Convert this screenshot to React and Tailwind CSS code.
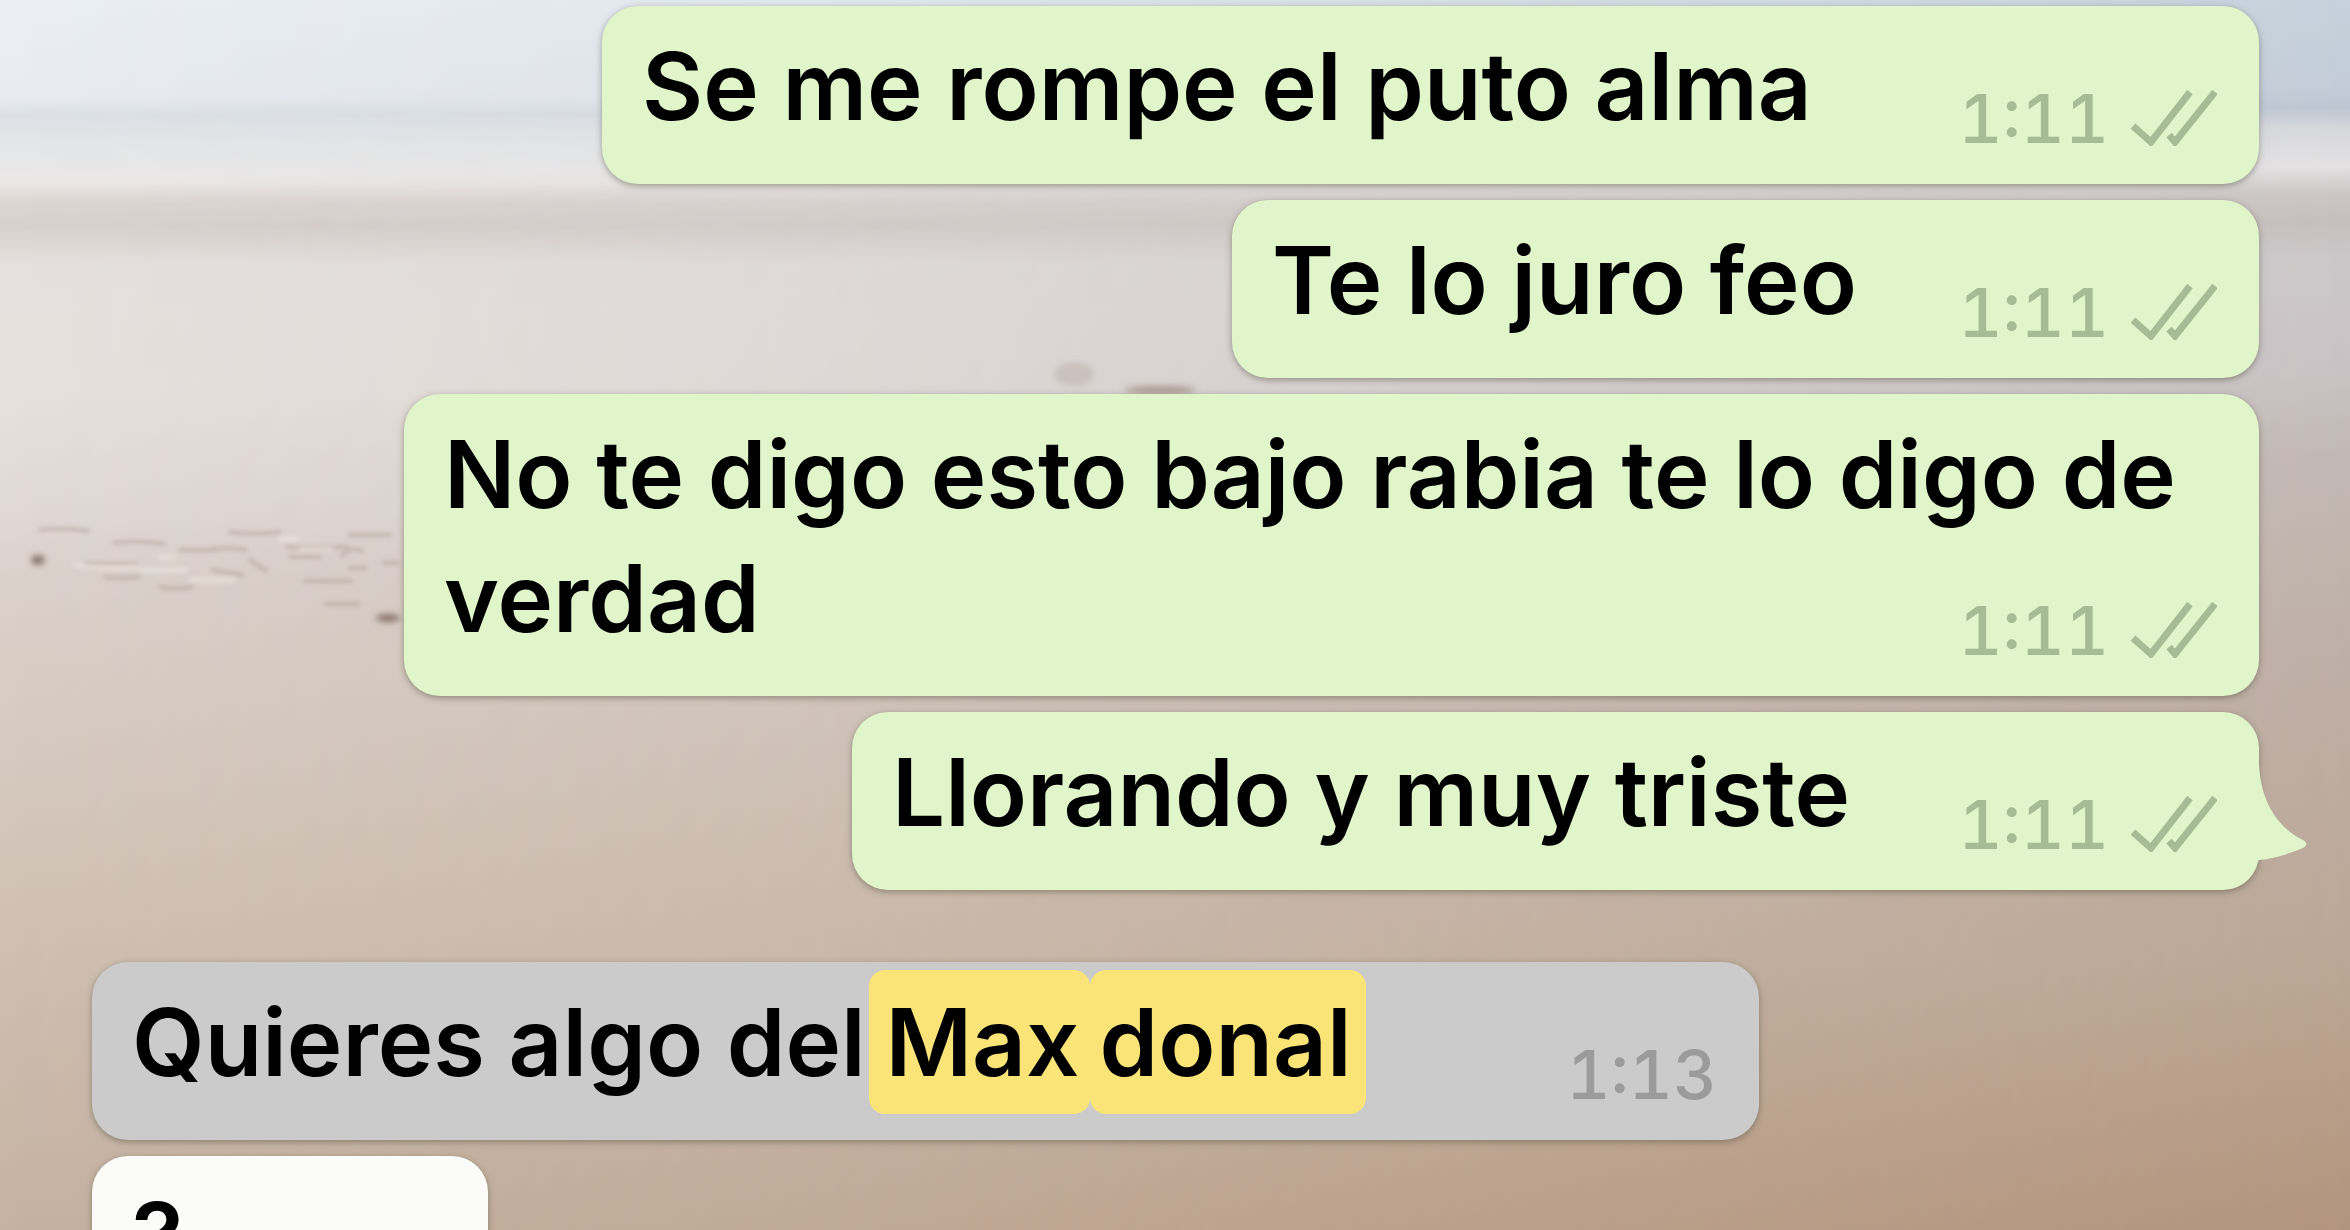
const messages = [
  { id: 1, own: true, text: 'Se me rompe el puto alma', time: '1:11', size: 'w-[1657px] min-h-[178px]' },
  { id: 2, own: true, text: 'Te lo juro feo', time: '1:11', size: 'w-[1027px] min-h-[178px]' },
  { id: 3, own: true, text: 'No te digo esto bajo rabia te lo digo de verdad', time: '1:11', size: 'w-[1855px] min-h-[302px]' },
  { id: 4, own: true, tail: true, text: 'Llorando y muy triste', time: '1:11', size: 'w-[1407px] min-h-[178px]' },
];

const replies = [
  { id: 5, dimmed: true, text: 'Quieres algo del', marks: ['Max', 'donal'], time: '1:13', size: 'w-[1667px] min-h-[178px]' },
  { id: 6, text: '?', size: 'w-[396px] min-h-[178px]' },
];

function Wallpaper() {
  return (
    <svg
      className="absolute inset-0 h-full w-full"
      viewBox="0 0 2350 1230"
      preserveAspectRatio="none"
      aria-hidden="true"
    >
      <defs>
        <linearGradient id="shoreLeft" x1="0" y1="0" x2="0" y2="1">
          <stop offset="0" stopColor="#ebeff4" />
          <stop offset="0.08" stopColor="#e8ebf0" />
          <stop offset="0.093" stopColor="#dde1e5" />
          <stop offset="0.12" stopColor="#e4e6e8" />
          <stop offset="0.148" stopColor="#ebe8e7" />
          <stop offset="0.165" stopColor="#dcd5d2" />
          <stop offset="0.185" stopColor="#d8d0cd" />
          <stop offset="0.215" stopColor="#e5e0de" />
          <stop offset="0.32" stopColor="#e7e0dd" />
          <stop offset="0.42" stopColor="#e1d8d4" />
          <stop offset="0.47" stopColor="#dbd1cb" />
          <stop offset="0.58" stopColor="#d7cbc2" />
          <stop offset="0.78" stopColor="#cfbfb1" />
          <stop offset="1" stopColor="#c5b2a1" />
        </linearGradient>
        <linearGradient id="shoreRight" x1="0" y1="0" x2="0" y2="1">
          <stop offset="0" stopColor="#c5d1dc" />
          <stop offset="0.07" stopColor="#c3ccd8" />
          <stop offset="0.088" stopColor="#bdc6d2" />
          <stop offset="0.105" stopColor="#d6d7db" />
          <stop offset="0.135" stopColor="#e3e1e2" />
          <stop offset="0.158" stopColor="#cbc6c6" />
          <stop offset="0.18" stopColor="#c5bebd" />
          <stop offset="0.21" stopColor="#cbc7c9" />
          <stop offset="0.3" stopColor="#c9c2c4" />
          <stop offset="0.37" stopColor="#c2b8b3" />
          <stop offset="0.58" stopColor="#bdada3" />
          <stop offset="0.78" stopColor="#bba795" />
          <stop offset="1" stopColor="#b3947d" />
        </linearGradient>
        <linearGradient id="sweep" x1="0" y1="0" x2="1" y2="0">
          <stop offset="0" stopColor="#000" />
          <stop offset="0.35" stopColor="#444" />
          <stop offset="1" stopColor="#fff" />
        </linearGradient>
        <mask id="sweepMask">
          <rect width="2350" height="1230" fill="url(#sweep)" />
        </mask>
        <filter id="soft" x="-20%" y="-100%" width="140%" height="300%">
          <feGaussianBlur stdDeviation="3" />
        </filter>
        <filter id="fine" x="-10%" y="-50%" width="120%" height="200%">
          <feGaussianBlur stdDeviation="2" />
        </filter>
      </defs>
      <rect width="2350" height="1230" fill="url(#shoreLeft)" />
      <rect width="2350" height="1230" fill="url(#shoreRight)" mask="url(#sweepMask)" />
      <g fill="none" stroke="#a08c82" strokeWidth="4" strokeLinecap="round" strokeOpacity="0.4" filter="url(#fine)">
        <path d="M40 530q24-3 48 1M114 543q24-3 50 1M180 550h36M212 549q20-2 34 1M287 547q24 2 60 0M350 535h40" />
        <path d="M86 564h50M105 577q16 2 34 0M212 570l30 5M250 560l16 11M290 557h30M342 556q8-10 20-5M350 568h16" />
        <path d="M160 587q16 3 32 0M305 581h46M325 604h34M384 563h14M230 532q20 3 50 0" />
      </g>
      <g fill="none" stroke="#f4ece6" strokeWidth="4" strokeLinecap="round" strokeOpacity="0.6" filter="url(#fine)">
        <path d="M75 565q30 4 62 2M140 570h46M160 557h14M280 539h16M300 549h32M190 580h44" />
      </g>
      <g fill="#8a7568" filter="url(#soft)">
        <ellipse cx="38" cy="560" rx="7" ry="5" />
        <ellipse cx="388" cy="618" rx="12" ry="4" />
        <ellipse cx="1074" cy="374" rx="20" ry="12" fillOpacity="0.2" />
        <ellipse cx="1160" cy="390" rx="36" ry="4" fillOpacity="0.6" />
      </g>
    </svg>
  );
}

function ReadTicks() {
  return (
    <svg className="h-[56px] w-[86px]" viewBox="0 0 86 56" fill="none" stroke="currentColor" strokeWidth="7" aria-hidden="true">
      <path d="M2 36L20 52L59 2" />
      <path d="M38 45L44 52L84 2" />
    </svg>
  );
}

function Tail() {
  return (
    <svg className="absolute right-[-48px] bottom-[26px] h-[100px] w-[60px]" viewBox="0 0 60 100" aria-hidden="true">
      <path d="M0 0H12C13 22 20 58 56 76Q63 80 56 84C42 90 26 95 12 96L0 100Z" fill="#e0f6ca" />
    </svg>
  );
}

function Bubble({ message }) {
  const { own, dimmed, tail, text, marks, time, size } = message;
  const color = own ? 'bg-[#e0f6ca]' : dimmed ? 'bg-[#cbcbcb]' : 'bg-[#fbfbfa]';

  return (
    <li
      className={`relative shrink-0 max-w-full rounded-[36px] px-[40px] pt-[18px] shadow-[0_2px_6px_rgba(80,80,60,0.5)] ${size} ${color} ${own ? 'self-end' : 'self-start'}`}
    >
      {tail && <Tail />}
      <p className="text-[94px] leading-[124px] font-semibold text-black">
        {text}
        {marks && (
          <>
            {' '}
            {marks.map((word, i) => (
              <mark
                key={word}
                className={`rounded-[16px] bg-[#fae478] py-[15px] text-black ${i === 0 ? '-ml-[20px] pl-[16px] pr-[10px]' : 'pl-[10px] pr-[14px]'}`}
              >
                {word}
              </mark>
            ))}
          </>
        )}
      </p>
      {time && (
        <div
          className={`absolute right-[42px] bottom-[26px] flex items-center gap-[22px] text-[68px] leading-[80px] font-medium tabular-nums ${own ? 'text-[#a6bc94]' : 'text-[#9b9b9b]'}`}
        >
          <time>{time}</time>
          {own && <ReadTicks />}
        </div>
      )}
    </li>
  );
}

export default function App() {
  return (
    <main className="relative h-screen overflow-hidden font-['Inter',sans-serif]">
      <Wallpaper />
      <div className="relative flex flex-col gap-[72px] pt-[6px] pr-[91px] pl-[92px]">
        <ul className="flex flex-col gap-[16px]">
          {messages.map((message) => (
            <Bubble key={message.id} message={message} />
          ))}
        </ul>
        <ul className="flex flex-col gap-[16px]">
          {replies.map((message) => (
            <Bubble key={message.id} message={message} />
          ))}
        </ul>
      </div>
    </main>
  );
}
